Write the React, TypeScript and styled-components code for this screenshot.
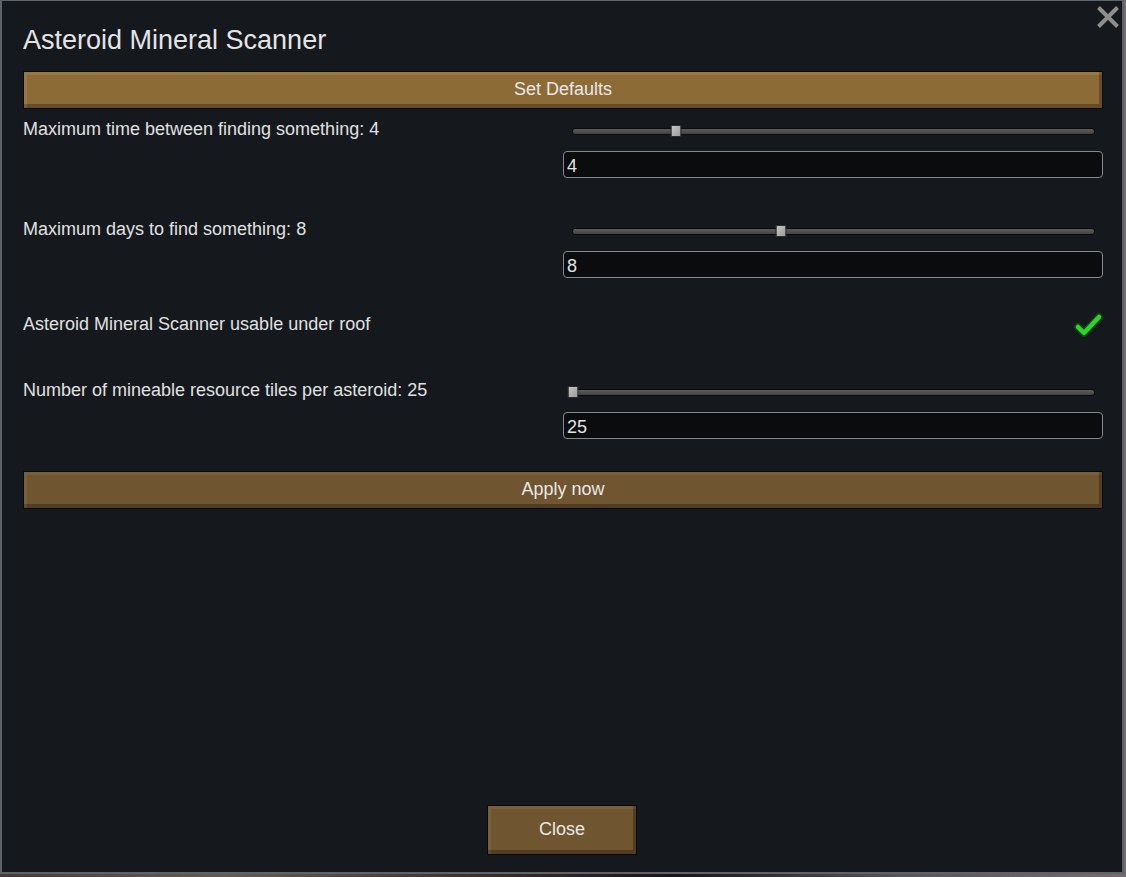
import React from "react";
import styled, { createGlobalStyle } from "styled-components";

const GlobalStyle = createGlobalStyle`
  html, body {
    margin: 0;
    padding: 0;
    width: 1126px;
    height: 877px;
    overflow: hidden;
    background: linear-gradient(90deg, #4a3a33 0%, #6b5a4a 20%, #3a2a22 45%, #1c1410 60%, #5a5450 80%, #7a6a66 100%);
    font-family: "Liberation Sans", Arial, sans-serif;
  }
  * { box-sizing: border-box; }
`;

const Window = styled.div`
  position: relative;
  width: 1124px;
  height: 874px;
  background: #15191d;
  border-style: solid;
  border-color: #5b636d;
  border-width: 1px 2px 2px 2px;
  padding: 23px 19px 17px 21px;
  display: flex;
  flex-direction: column;
  color: #e2e2e2;
`;

const CloseX = styled.button`
  position: absolute;
  top: 3px;
  right: 1px;
  width: 26px;
  height: 26px;
  padding: 0;
  border: none;
  background: transparent;
  display: flex;
  align-items: center;
  justify-content: center;
  cursor: pointer;
`;

const Title = styled.h1`
  margin: 0;
  font-size: 27px;
  line-height: 32px;
  font-weight: normal;
  color: #e4e4e4;
`;

const WoodButton = styled.button<{ $lit?: boolean; $mt?: number; $width?: number; $height?: number }>`
  display: flex;
  align-items: center;
  justify-content: center;
  width: ${(p) => (p.$width ? `${p.$width}px` : "100%")};
  height: ${(p) => p.$height ?? 38}px;
  margin-top: ${(p) => p.$mt ?? 0}px;
  padding: 0 0 2px 0;
  border: 1px solid #0a0a08;
  background: ${(p) => (p.$lit ? "#8d6b36" : "#6f5530")};
  box-shadow:
    inset 3px 3px 0 ${(p) => (p.$lit ? "rgba(255,230,170,0.10)" : "rgba(255,230,170,0.07)")},
    inset -3px -4px 0 rgba(0, 0, 0, 0.28);
  font-family: "Liberation Sans", Arial, sans-serif;
  font-size: 18px;
  color: #e8e8e8;
  cursor: pointer;
  flex-shrink: 0;
`;

const SettingRow = styled.div<{ $mt: number; $height?: number }>`
  display: grid;
  grid-template-columns: 540px 540px;
  margin-top: ${(p) => p.$mt}px;
  ${(p) => (p.$height ? `height: ${p.$height}px;` : "")}
`;

const Label = styled.div`
  font-size: 18px;
  line-height: 22px;
  color: #e0e0e0;
  white-space: nowrap;
`;

const ControlColumn = styled.div`
  display: flex;
  flex-direction: column;
`;

const SliderArea = styled.div`
  height: 26px;
  padding: 0 8px 0 9px;
  display: flex;
  align-items: center;
`;

const Track = styled.div`
  position: relative;
  flex: 1;
  height: 7px;
  border-radius: 3px;
  background: linear-gradient(#5c5c5c, #434343);
  border: 1px solid #0b0b0b;
`;

const Handle = styled.div`
  position: absolute;
  top: 50%;
  width: 11px;
  height: 12px;
  transform: translate(-50%, -50%);
  background: linear-gradient(135deg, #c6c6c6, #9a9a9a);
  border: 1px solid #2a2a2a;
`;

const TextField = styled.input`
  margin-top: 7px;
  height: 27px;
  width: 100%;
  padding: 3px 3px 0 3px;
  border: 1px solid #85888c;
  border-radius: 4px;
  background: #0b0c0d;
  color: #e2e2e2;
  font-family: "Liberation Sans", Arial, sans-serif;
  font-size: 18px;
  outline: none;
`;

const CheckCell = styled.div`
  display: flex;
  justify-content: flex-end;
  align-items: flex-start;
`;

const Spacer = styled.div`
  flex: 1;
`;

const Footer = styled.div`
  display: flex;
  justify-content: center;
  padding-right: 2px;
`;

function SliderSetting({
  label,
  value,
  pct,
  mt,
}: {
  label: string;
  value: number;
  pct: number;
  mt: number;
}) {
  return (
    <SettingRow $mt={mt}>
      <Label>
        {label}: {value}
      </Label>
      <ControlColumn>
        <SliderArea>
          <Track>
            <Handle style={{ left: `${pct}%` }} />
          </Track>
        </SliderArea>
        <TextField readOnly value={String(value)} />
      </ControlColumn>
    </SettingRow>
  );
}

function CheckMark() {
  return (
    <svg width="29" height="26" viewBox="0 0 29 26">
      <polyline
        points="4,14 10,20 25,4"
        fill="none"
        stroke="#0e4a0e"
        strokeWidth="7.5"
        strokeLinecap="round"
        strokeLinejoin="round"
      />
      <polyline
        points="4,14 10,20 25,4"
        fill="none"
        stroke="#2fd32b"
        strokeWidth="4.5"
        strokeLinecap="round"
        strokeLinejoin="round"
      />
    </svg>
  );
}

export default function App() {
  return (
    <>
      <GlobalStyle />
      <Window>
        <CloseX aria-label="Close">
          <svg width="24" height="24" viewBox="0 0 24 24">
            <path d="M2.5 2.5 L21.5 21.5 M21.5 2.5 L2.5 21.5" stroke="#8e8e8e" strokeWidth="4" />
          </svg>
        </CloseX>
        <Title>Asteroid Mineral Scanner</Title>
        <WoodButton $lit $mt={15}>Set Defaults</WoodButton>
        <SliderSetting label="Maximum time between finding something" value={4} pct={19.8} mt={9} />
        <SliderSetting label="Maximum days to find something" value={8} pct={39.9} mt={40} />
        <SettingRow $mt={35} $height={25}>
          <Label>Asteroid Mineral Scanner usable under roof</Label>
          <CheckCell>
            <CheckMark />
          </CheckCell>
        </SettingRow>
        <SliderSetting label="Number of mineable resource tiles per asteroid" value={25} pct={0} mt={41} />
        <WoodButton $mt={32}>Apply now</WoodButton>
        <Spacer />
        <Footer>
          <WoodButton $width={150} $height={50}>Close</WoodButton>
        </Footer>
      </Window>
    </>
  );
}
